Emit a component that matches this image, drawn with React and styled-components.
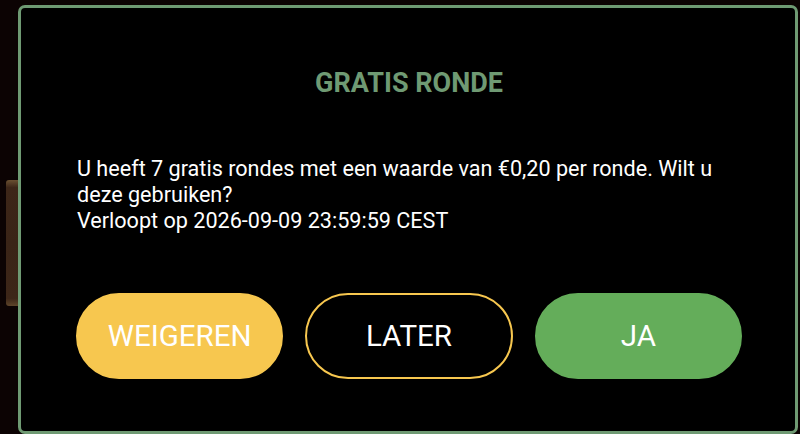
import React from "react";
import styled, { createGlobalStyle } from "styled-components";

const GlobalStyle = createGlobalStyle`
  html, body {
    margin: 0;
    padding: 0;
    background: #0c0303;
  }
  * {
    box-sizing: border-box;
  }
`;

const Page = styled.div`
  display: flex;
  align-items: flex-start;
  width: 800px;
  height: 434px;
  padding: 5px 2px 0 6px;
  overflow: hidden;
  background: #0c0303;
  font-family: Roboto, "Liberation Sans", Arial, sans-serif;
`;

const SideTab = styled.div`
  width: 12px;
  height: 126px;
  margin-top: 175px;
  border-radius: 3px 0 0 3px;
  background: linear-gradient(
    180deg,
    #6a5031 0%,
    #3d2618 6%,
    #3a2417 50%,
    #3d2618 94%,
    #5e452a 100%
  );
`;

const Dialog = styled.div`
  flex: 1;
  height: 429px;
  display: flex;
  flex-direction: column;
  padding: 60px 53px 0 55px;
  border: 3px solid #6f9a73;
  border-radius: 7px;
  background: #000;
`;

const Title = styled.h2`
  margin: 0;
  font-size: 27px;
  line-height: 30px;
  font-weight: 700;
  text-align: center;
  color: #6f9a73;
`;

const Message = styled.p`
  margin: 58px 0 0;
  padding-left: 1px;
  font-size: 21.6px;
  line-height: 26px;
  color: #fff;
`;

const Actions = styled.div`
  display: grid;
  grid-template-columns: repeat(3, 1fr);
  gap: 22px;
  margin-top: 59px;
`;

const tones = {
  refuse: { bg: "#f7c74f", border: "#f7c74f" },
  later: { bg: "#000", border: "#f7c74f" },
  accept: { bg: "#64ad5a", border: "#64ad5a" },
};

const ActionButton = styled.button`
  height: 86px;
  border-radius: 43px;
  border: 2px solid ${({ $tone }) => tones[$tone].border};
  background: ${({ $tone }) => tones[$tone].bg};
  color: #fff;
  font-family: inherit;
  font-size: 29.5px;
  font-weight: 400;
  text-transform: uppercase;
  cursor: pointer;
`;

const App = () => {
  return (
    <>
      <GlobalStyle />
      <Page>
        <SideTab />
        <Dialog>
          <Title>GRATIS RONDE</Title>
          <Message>
            U heeft 7 gratis rondes met een waarde van €0,20 per ronde. Wilt u
            deze gebruiken?
            <br />
            Verloopt op 2026-09-09 23:59:59 CEST
          </Message>
          <Actions>
            <ActionButton $tone="refuse">Weigeren</ActionButton>
            <ActionButton $tone="later">Later</ActionButton>
            <ActionButton $tone="accept">Ja</ActionButton>
          </Actions>
        </Dialog>
      </Page>
    </>
  );
};

export default App;
